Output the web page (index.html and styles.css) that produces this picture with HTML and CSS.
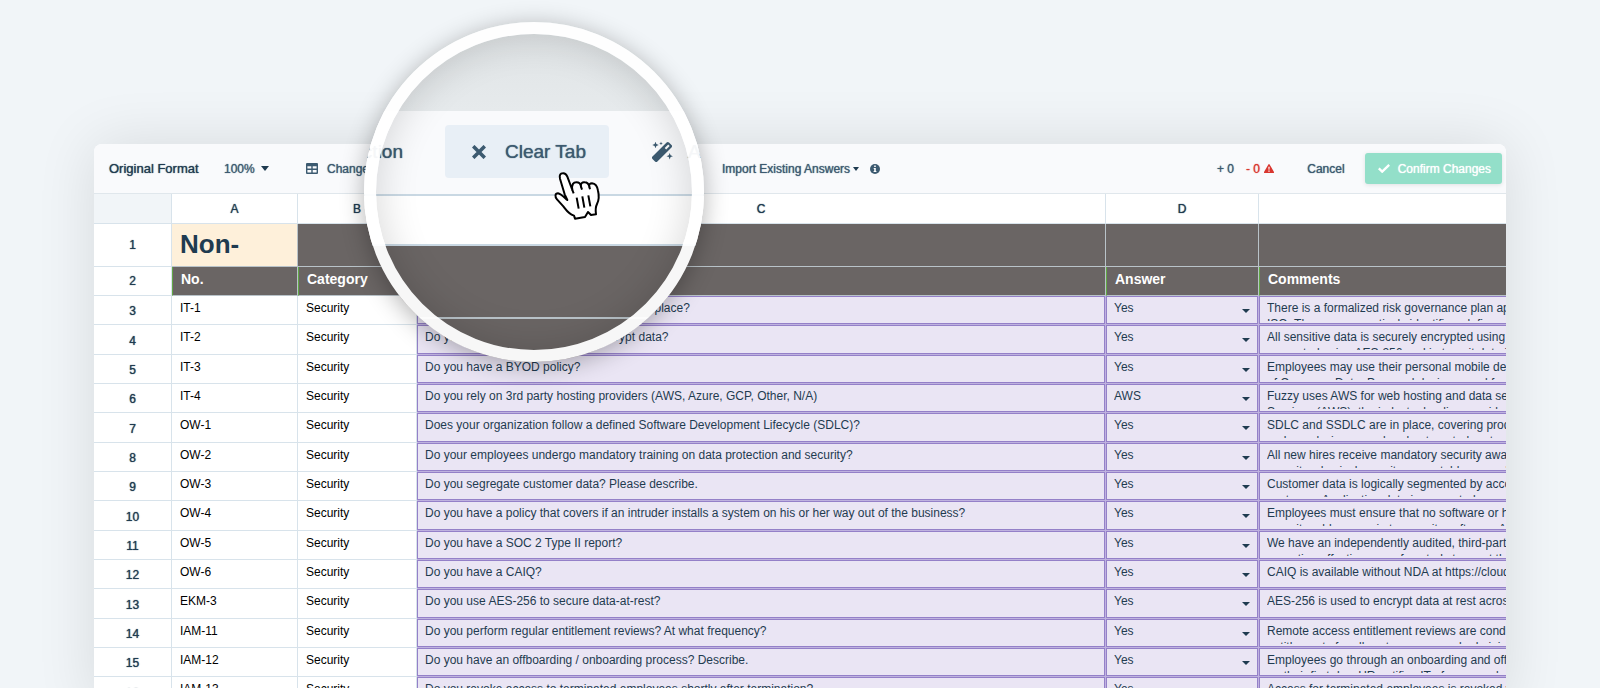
FILE: index.html
```html
<!DOCTYPE html>
<html lang="en">
<head>
    <meta charset="UTF-8">
    <meta name="viewport" content="width=device-width, initial-scale=1.0">
    <title>Original Format</title>
    <link rel="stylesheet" href="styles.css">
</head>
<body>

<div class="page">
    <div class="stage">
        <div class="panel">
            <!-- Toolbar -->
            <div class="toolbar">
                <h1>Original Format</h1>
                <button class="tool zoom-btn">100% <i class="caret caret-big"></i></button>
                <button class="tool change-btn">
                    <svg width="12" height="11" viewBox="0 0 12 11"><path fill-rule="evenodd" fill="currentColor" d="M1 0h10a1 1 0 0 1 1 1v9a1 1 0 0 1-1 1H1a1 1 0 0 1-1-1V1a1 1 0 0 1 1-1zM1.4 3.2v2.3h3.9V3.2zM6.7 3.2v2.3h3.9V3.2zM1.4 7v2.5h3.9V7zM6.7 7v2.5h3.9V7z"/></svg>
                    Change Selection
                </button>
                <button class="tool import-btn">Import Existing Answers <i class="caret"></i></button>
                <svg class="info" width="10" height="10" viewBox="0 0 10 10"><circle cx="5" cy="5" r="5" fill="currentColor"/><path fill="#fff" d="M4.2 1.6h1.6v1.5H4.2zM3.7 4.1h2.1v2.8h.6v1H3.6v-1h.6V5.1h-.5z"/></svg>
                <div class="counts">
                    <span>+ 0</span>
                    <span class="removed">- 0
                        <svg width="10" height="9" viewBox="0 0 20 18"><path fill="currentColor" d="M10 0a1.5 1.5 0 0 1 1.3.8l8.4 14.8a1.6 1.6 0 0 1-1.3 2.4H1.6a1.6 1.6 0 0 1-1.3-2.4L8.7.8A1.5 1.5 0 0 1 10 0z"/><path fill="#fff" d="M8.7 5.5h2.6l-.4 6H9.1zM8.7 13h2.6v2.5H8.7z"/></svg>
                    </span>
                </div>
                <button class="tool cancel-btn">Cancel</button>
                <button class="confirm-btn">
                    <svg width="12" height="9" viewBox="0 0 12 9"><path fill="none" stroke="currentColor" stroke-width="2.4" d="M.8 4.4l3.4 3.2L11.2.9"/></svg>
                    Confirm Changes
                </button>
            </div>

            <!-- Sheet -->
            <table class="sheet">
                <colgroup>
                    <col class="col-num"><col class="col-a"><col class="col-b"><col><col class="col-d"><col class="col-e">
                </colgroup>
                <thead>
                    <tr class="letters"><th></th><th>A</th><th>B</th><th>C</th><th>D</th><th></th></tr>
                    <tr class="title-row"><th>1</th><td class="title">Non-</td><td></td><td></td><td></td><td></td></tr>
                    <tr class="label-row"><th>2</th><td>No.</td><td>Category</td><td>Question</td><td>Answer</td><td>Comments</td></tr>
                </thead>
                <tbody id="rows"></tbody>
            </table>
        </div>

        <!-- Magnifier -->
        <div class="lens">
            <div class="lens-view">
                <div class="lens-top"></div>
                <div class="lens-bar">
                    <span class="lens-prev">Change Selection</span>
                    <button class="clear-btn">
                        <svg width="14" height="14" viewBox="0 0 14 14"><path fill="none" stroke="currentColor" stroke-width="3.6" d="M1.2 1.2l11.6 11.6M12.8 1.2L1.2 12.8"/></svg>
                        Clear Tab
                    </button>
                    <svg class="wand" width="21" height="21" viewBox="0 0 21 21"><path fill="currentColor" fill-rule="evenodd" d="M.5 15.600L14.600 1.500a1.700 1.700 0 0 1 2.400 0l2.500 2.500a1.700 1.700 0 0 1 0 2.400L5.400 20.500a1.700 1.700 0 0 1-2.400 0L.5 18a1.700 1.700 0 0 1 0-2.400zM12.700 6.900l1.500 1.500 3.500-3.500-1.500-1.500z"/><path fill="currentColor" d="M3.500 .8l.9 2.300 2.300.9-2.300.9-.9 2.300-.9-2.300L.3 4l2.300-.9zM9 .6l.5 1.300 1.300.5-1.300.5L9 4.200l-.5-1.300-1.300-.5 1.300-.5zM17.700 12l.9 2.300 2.300.9-2.300.9-.9 2.300-.9-2.300-2.300-.9 2.300-.9z"/></svg>
                    <span class="lens-next">Autofill</span>
                </div>
                <div class="lens-letters"></div>
                <div class="lens-title"></div>
                <div class="lens-labels"></div>
            </div>
            <svg class="pointer" width="80" height="70" viewBox="0 0 240 210">
                <path fill="#fff" stroke="#000" stroke-width="6" stroke-linejoin="round" d="M74 103L60 56C57 44 62 40 68 40C75 39 79 43 82 50L97 90C94 72 101 67 109 67C118 67 122 72 123 80C121 70 127 66 134 67C143 67 146 72 148 80C146 73 150 70 156 70C167 71 172 80 174 92C178 108 177 120 171 132C166 142 166 150 168 163L153 165L144 156L135 171L105 176L102 167C84 161 78 149 70 139L51 118C44 110 45 100 54 100C61 101 67 107 82 120Z"/>
                <path fill="none" stroke="#000" stroke-width="6" d="M97 90l4 10M123 80l3 9M148 80l2 8M110 113l6 33M127 109l6 34M145 106l6 33"/>
            </svg>
        </div>
    </div>
</div>

<script>
    const rows = [
        ['IT-1', 'Do you have a risk governance program in place?', 'Yes', 'There is a formalized risk governance plan approved by', 'ISO. The program actively identifies, defines and'],
        ['IT-2', 'Do you have the functionality to encrypt data?', 'Yes', 'All sensitive data is securely encrypted using platform', 'encrypted using AES-256 and in transit data is sent'],
        ['IT-3', 'Do you have a BYOD policy?', 'Yes', 'Employees may use their personal mobile devices', 'of Company Data. Personal devices used for'],
        ['IT-4', 'Do you rely on 3rd party hosting providers (AWS, Azure, GCP, Other, N/A)', 'AWS', 'Fuzzy uses AWS for web hosting and data services', 'Services (AWS), the industry leading provider'],
        ['OW-1', 'Does your organization follow a defined Software Development Lifecycle (SDLC)?', 'Yes', 'SDLC and SSDLC are in place, covering product', 'code analysis, manual and automated parts'],
        ['OW-2', 'Do your employees undergo mandatory training on data protection and security?', 'Yes', 'All new hires receive mandatory security awareness', 'security, physical security, acceptable use policy'],
        ['OW-3', 'Do you segregate customer data? Please describe.', 'Yes', 'Customer data is logically segmented by account', 'customer. Application data is separated as'],
        ['OW-4', 'Do you have a policy that covers if an intruder installs a system on his or her way out of the business?', 'Yes', 'Employees must ensure that no software or hardware', 'security addresses via to security software. A'],
        ['OW-5', 'Do you have a SOC 2 Type II report?', 'Yes', 'We have an independently audited, third-party', 'operating effectiveness of controls to meet the'],
        ['OW-6', 'Do you have a CAIQ?', 'Yes', 'CAIQ is available without NDA at https://cloudsecurity', ''],
        ['EKM-3', 'Do you use AES-256 to secure data-at-rest?', 'Yes', 'AES-256 is used to encrypt data at rest across all', ''],
        ['IAM-11', 'Do you perform regular entitlement reviews? At what frequency?', 'Yes', 'Remote access entitlement reviews are conducted', 'entitlements for all system users and administrators'],
        ['IAM-12', 'Do you have an offboarding / onboarding process? Describe.', 'Yes', 'Employees go through an onboarding and offboarding', 'on their first day. HR notifies IT of new employees'],
        ['IAM-13', 'Do you revoke access to terminated employees shortly after termination?', 'Yes', 'Access for terminated employees is revoked within', '']
    ];

    document.getElementById('rows').innerHTML = rows.map(([id, question, answer, line1, line2], i) => `
        <tr>
            <th>${i + 3}</th>
            <td>${id}</td>
            <td>Security</td>
            <td class="mapped">${question}</td>
            <td class="mapped answer">
                <select aria-label="Answer for ${id}"><option>${answer}</option></select><i class="caret"></i>
            </td>
            <td class="mapped"><div class="comment">${line1}<br>${line2}</div></td>
        </tr>`).join('');
</script>

</body>
</html>
```
FILE: styles.css
```css
* {
    box-sizing: border-box;
}

body {
    margin: 0;
    background-color: #f1f5f8;
    color: #1f3b50;
    font-family: "Liberation Sans", Arial, sans-serif;
    font-size: 12px;
    line-height: 16px;
}

button, select {
    font: inherit;
    color: inherit;
    border: none;
    background: none;
    padding: 0;
    margin: 0;
    cursor: pointer;
}

.page {
    height: 100vh;
    overflow: hidden;
    padding: 144px 94px 0;
}

.stage {
    position: relative;
}

.panel {
    overflow: hidden;
    border-radius: 8px 8px 0 0;
    background-color: #fff;
    box-shadow: 0 0 60px rgba(0, 0, 0, 0.11);
}

/* Toolbar */
.toolbar {
    display: flex;
    align-items: center;
    height: 50px;
    padding: 0 4px 0 15px;
    background-color: #f9fafc;
    border-bottom: 1px solid #e0e7ec;
    color: #3c5a70;
    text-shadow: 0 0 1px currentColor;
    white-space: nowrap;
}

.toolbar h1 {
    margin: 0;
    width: 115px;
    font-size: 13px;
    font-weight: normal;
    color: #1f3b50;
}

.tool {
    display: flex;
    align-items: center;
    text-shadow: inherit;
}

.caret {
    width: 0;
    height: 0;
    border: 3px solid transparent;
    border-top: 4px solid currentColor;
    border-bottom: 0;
    color: #1f3b50;
}

.caret-big {
    border-width: 5px 4px 0;
}

.zoom-btn {
    width: 82px;
    gap: 6px;
}

.change-btn {
    gap: 9px;
    width: 416px;
}

.import-btn {
    gap: 3px;
    width: 148px;
}

.counts {
    display: flex;
    gap: 12px;
    margin-left: auto;
    margin-right: 33px;
}

.removed {
    color: #d9362f;
}

.removed svg {
    margin-left: 1px;
}

.cancel-btn {
    margin-right: 20px;
}

.confirm-btn {
    display: flex;
    align-items: center;
    gap: 8px;
    height: 31px;
    padding: 0 11px 0 13px;
    border-radius: 3px;
    background-color: #93dfc9;
    color: #fff;
    box-shadow: 0 1px 4px rgba(0, 0, 0, 0.1);
    text-shadow: inherit;
}

/* Sheet, its last column runs past the panel's edge */
.sheet {
    width: calc(100% + 60px);
    table-layout: fixed;
    border-collapse: separate;
    border-spacing: 0;
}

.col-num { width: 78px; }
.col-a { width: 126px; }
.col-b { width: 119px; }
.col-d { width: 153px; }
.col-e { width: 307px; }

.sheet th, .sheet td {
    padding: 0 8px;
    border-right: 1px solid #d8e3eb;
    border-bottom: 1px solid #d8e3eb;
    text-align: left;
    overflow: hidden;
    white-space: nowrap;
}

.sheet th {
    font-weight: normal;
    text-align: center;
    text-shadow: 0 0 1px currentColor;
}

.letters {
    height: 30px;
}

.letters th:first-child {
    background-color: #f1f5f8;
}

.title-row {
    height: 43px;
}

.title-row td, .label-row td {
    background-color: #6a6564;
    border-color: #b9c3c9;
}

.title-row .title {
    background-color: #fef0da;
    font-size: 26px;
    font-weight: bold;
    padding-bottom: 2px;
}

.label-row {
    height: 29px;
}

.label-row td {
    border-left: 1px solid #62a744;
    color: #fff;
    font-size: 14px;
    font-weight: bold;
    padding-bottom: 4px;
}

tbody tr {
    height: 29px;
}

tbody tr:nth-child(3n + 2) {
    height: 30px;
}

.sheet tbody th {
    padding-top: 2px;
}

.sheet tbody td {
    padding-top: 4px;
    vertical-align: top;
    color: #000;
}

.sheet tbody .mapped {
    background-color: #eae5f4;
    border-color: #bfb2df;
    box-shadow: inset 0 0 0 1px #9480c8;
    color: #1f3b50;
}

.answer {
    position: relative;
}

.answer select {
    display: block;
    width: 100%;
    height: 16px;
    appearance: none;
}

.answer .caret {
    position: absolute;
    right: 8px;
    top: 13px;
    border-width: 4px 4px 0;
    pointer-events: none;
}

.comment {
    height: 21px;
    overflow: hidden;
}

/* Magnifier */
.lens {
    position: absolute;
    left: 270px;
    top: -122px;
    width: 340px;
    height: 340px;
    border-radius: 50%;
    box-shadow: 0 4px 24px rgba(0, 0, 0, 0.3);
}

.lens-view {
    display: flex;
    flex-direction: column;
    height: 100%;
    border-radius: 50%;
    overflow: hidden;
    color: #3c5a70;
    font-size: 19px;
    line-height: 24px;
    white-space: nowrap;
}

/* glass shading and the white ring */
.lens-view::before, .lens-view::after {
    content: "";
    position: absolute;
    border-radius: 50%;
    pointer-events: none;
}

.lens-view::before {
    inset: 12px;
    box-shadow: inset 0 0 40px rgba(0, 0, 0, 0.16);
}

.lens-view::after {
    inset: 0;
    border: 12px solid rgba(255, 255, 255, 0.95);
}

.lens-top {
    height: 89px;
    background: linear-gradient(#dfe3e5, #e6eaec);
}

.lens-bar {
    display: flex;
    align-items: center;
    height: 85px;
    padding-bottom: 2px;
    background-color: #f9fafc;
    border-bottom: 2px solid #c9d8e3;
    text-shadow: 0 0 1px currentColor;
}

.lens-prev {
    display: flex;
    flex: none;
    justify-content: flex-end;
    width: 39px;
}

.clear-btn {
    display: flex;
    flex: none;
    align-items: center;
    gap: 19px;
    width: 164px;
    height: 53px;
    margin: 0 43px 0 42px;
    padding-left: 27px;
    border-radius: 4px;
    background-color: #e8eff6;
    text-shadow: inherit;
}

.wand {
    flex: none;
    margin-right: 15px;
}

.lens-letters {
    height: 50px;
    background-color: #fff;
    border-bottom: 2px solid #c9d8e3;
}

.lens-title {
    height: 73px;
    background-color: #6a6564;
    border-bottom: 2px solid #b9c3c9;
}

.lens-labels {
    flex: 1;
    background-color: #6a6564;
}

.pointer {
    position: absolute;
    left: 176px;
    top: 138px;
}
```
